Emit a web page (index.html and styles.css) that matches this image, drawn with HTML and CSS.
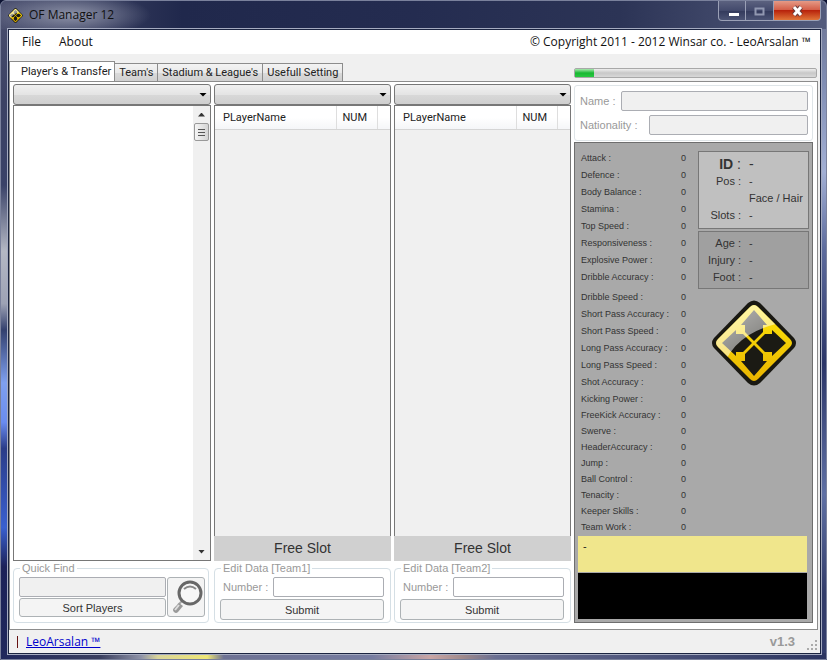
FILE: index.html
```html
<!DOCTYPE html>
<html lang="en">
<head>
<meta charset="utf-8">
<title>OF Manager 12</title>
<link rel="stylesheet" href="styles.css">
</head>
<body>
<svg class="defs" aria-hidden="true">
  <defs>
    <linearGradient id="gold" x1="0" y1="0" x2="0" y2="1">
      <stop offset="0" stop-color="#ffe70a"/><stop offset="1" stop-color="#e9b400"/>
    </linearGradient>
    <linearGradient id="shine" x1="0" y1="0" x2="1" y2="1">
      <stop offset="0" stop-color="#fff" stop-opacity=".75"/><stop offset="1" stop-color="#fff" stop-opacity=".3"/>
    </linearGradient>
    <clipPath id="plate"><path d="M39 7Q43 3 47 7L79 39Q83 43 79 47L47 79Q43 83 39 79L7 47Q3 43 7 39Z"/></clipPath>
    <symbol id="logo" viewBox="0 0 86 86">
      <path d="M37 3Q43-2 49 3L83 38Q87 43 83 48L49 83Q43 88 37 83L3 48Q-1 43 3 38Z" fill="#191812"/>
      <path d="M39 7Q43 3 47 7L79 39Q83 43 79 47L47 79Q43 83 39 79L7 47Q3 43 7 39Z" fill="url(#gold)"/>
      <g fill="#1b1a14">
        <path d="M43 10L56 25H52V32L43 41L34 32V25H30Z"/>
        <path d="M43 76L56 61H52V54L43 45L34 54V61H30Z"/>
        <path d="M11 43L25 30V34H32L41 43L32 52H25V56Z"/>
        <path d="M75 43L61 30V34H54L45 43L54 52H61V56Z"/>
      </g>
      <path d="M0 0H86V20Q55 24 38 35Q22 45 15 60L0 60Z" fill="url(#shine)" clip-path="url(#plate)"/>
    </symbol>
  </defs>
</svg>

<div class="window">
  <header class="titlebar">
    <svg class="app-icon" aria-hidden="true"><use href="#logo"/></svg>
    <h1>OF Manager 12</h1>
    <div class="caption">
      <button type="button" aria-label="Minimize"><svg width="28" height="18"><path d="M10 11h10v3H10z" fill="#fff"/></svg></button>
      <button type="button" aria-label="Maximize"><svg width="28" height="18"><path d="M9.500 6.500h8v6h-8z" fill="none" stroke="#9198b1" stroke-width="2"/></svg></button>
      <button type="button" class="close" aria-label="Close"><svg width="46" height="18"><path d="M20 5l7 8M27 5l-7 8" stroke="#6b3a38" stroke-width="5"/><path d="M20 5l7 8M27 5l-7 8" stroke="#fff" stroke-width="3"/></svg></button>
    </div>
  </header>

  <div class="client">
    <nav class="menubar">
      <button type="button">File</button>
      <button type="button">About</button>
      <span class="copyright">© Copyright 2011 - 2012 Winsar co. - LeoArsalan ™</span>
    </nav>

    <div class="strip">
      <div class="tabs" role="tablist">
        <button type="button" role="tab" aria-selected="true">Player's &amp; Transfer</button>
        <button type="button" role="tab">Team's</button>
        <button type="button" role="tab">Stadium &amp; League's</button>
        <button type="button" role="tab">Usefull Setting</button>
      </div>
      <div class="progress" role="progressbar" aria-label="Loading" aria-valuenow="8"><div class="bar"></div></div>
    </div>

    <main class="page">
      <section class="column players">
        <span class="combo"><select aria-label="Player group"></select></span>
        <div class="listbox">
          <div class="scrollbar">
            <button type="button" class="up" aria-label="Scroll up"></button>
            <div class="thumb"><i></i><i></i><i></i></div>
            <button type="button" class="down" aria-label="Scroll down"></button>
          </div>
        </div>
        <fieldset>
          <legend>Quick Find</legend>
          <div class="find">
            <div class="find-fields">
              <input type="text" aria-label="Quick Find" disabled>
              <button type="button">Sort Players</button>
            </div>
            <button type="button" class="search" aria-label="Search">
              <svg width="36" height="36" viewBox="0 0 36 36">
                <path d="M14 22l-4 4" stroke="#aaa" stroke-width="2"/>
                <path d="M11 24l4 3-5 6q-2 2-4 0t0-4z" fill="#999"/><path d="M11 26l-4 5" stroke="#ddd" stroke-width="2"/>
                <circle cx="22" cy="14" r="11" fill="#f7f7f7" stroke="#686868" stroke-width="3"/>
                <path d="M16 10q6-5 12 0" fill="none" stroke="#888" stroke-width="2"/>
              </svg>
            </button>
          </div>
        </fieldset>
      </section>

      <section class="column">
        <span class="combo"><select aria-label="Team 1"></select></span>
        <div class="grid-list"><table><thead><tr><th>PLayerName</th><th class="num">NUM</th><th class="rest"></th></tr></thead></table></div>
        <div class="slot">Free Slot</div>
        <fieldset>
          <legend>Edit Data [Team1]</legend>
          <div class="field"><label for="n1">Number :</label><input id="n1" type="text"></div>
          <button type="button" class="submit">Submit</button>
        </fieldset>
      </section>

      <section class="column">
        <span class="combo"><select aria-label="Team 2"></select></span>
        <div class="grid-list"><table><thead><tr><th>PLayerName</th><th class="num">NUM</th><th class="rest"></th></tr></thead></table></div>
        <div class="slot">Free Slot</div>
        <fieldset>
          <legend>Edit Data [Team2]</legend>
          <div class="field"><label for="n2">Number :</label><input id="n2" type="text"></div>
          <button type="button" class="submit">Submit</button>
        </fieldset>
      </section>

      <section class="detail">
        <div class="identity">
          <div class="field"><label for="name">Name :</label><input id="name" type="text" disabled></div>
          <div class="field nation"><label for="nation">Nationality :</label><input id="nation" type="text" disabled></div>
        </div>
        <div class="stats">
          <div class="stats-top">
            <table class="abilities">
              <tbody>
                <tr><th>Attack :</th><td>0</td></tr>
                <tr><th>Defence :</th><td>0</td></tr>
                <tr><th>Body Balance :</th><td>0</td></tr>
                <tr><th>Stamina :</th><td>0</td></tr>
                <tr><th>Top Speed :</th><td>0</td></tr>
                <tr><th>Responsiveness :</th><td>0</td></tr>
                <tr><th>Explosive Power :</th><td>0</td></tr>
                <tr class="last"><th>Dribble Accuracy :</th><td>0</td></tr>
              </tbody>
              <tbody>
                <tr><th>Dribble Speed :</th><td>0</td></tr>
                <tr><th>Short Pass Accuracy :</th><td>0</td></tr>
                <tr><th>Short Pass Speed :</th><td>0</td></tr>
                <tr><th>Long Pass Accuracy :</th><td>0</td></tr>
                <tr><th>Long Pass Speed :</th><td>0</td></tr>
                <tr><th>Shot Accuracy :</th><td>0</td></tr>
                <tr><th>Kicking Power :</th><td>0</td></tr>
              </tbody>
              <tbody class="tight">
                <tr><th>FreeKick Accuracy :</th><td>0</td></tr>
                <tr><th>Swerve :</th><td>0</td></tr>
                <tr><th>HeaderAccuracy :</th><td>0</td></tr>
                <tr><th>Jump :</th><td>0</td></tr>
                <tr><th>Ball Control :</th><td>0</td></tr>
                <tr><th>Tenacity :</th><td>0</td></tr>
                <tr><th>Keeper Skills :</th><td>0</td></tr>
                <tr><th>Team Work :</th><td>0</td></tr>
              </tbody>
            </table>
            <div class="side">
              <dl class="card light">
                <dt class="id"><b>ID</b> :</dt><dd class="id">-</dd>
                <dt>Pos :</dt><dd>-</dd>
                <dt></dt><dd>Face / Hair</dd>
                <dt>Slots :</dt><dd>-</dd>
              </dl>
              <dl class="card">
                <dt>Age :</dt><dd>-</dd>
                <dt>Injury :</dt><dd>-</dd>
                <dt>Foot :</dt><dd>-</dd>
              </dl>
              <svg class="emblem" role="img" aria-label="OF Manager"><use href="#logo"/></svg>
            </div>
          </div>
          <div class="note">-</div>
          <div class="console"></div>
        </div>
      </section>
    </main>

    <footer class="status">
      <span class="tick"></span>
      <a href="#">LeoArsalan ™</a>
      <span class="version">v1.3</span>
      <svg class="grip" width="11" height="11" aria-hidden="true"><path d="M8 0h2v2H8zM4 4h2v2H4zM8 4h2v2H8zM0 8h2v2H0zM4 8h2v2H4zM8 8h2v2H8z" fill="#aaa"/></svg>
    </footer>
  </div>
</div>
</body>
</html>
```
FILE: styles.css
```css
* { box-sizing: border-box; }
html, body { height: 100%; margin: 0; }
body {
  background: #0c1232;
  color: #222;
  font: 11px/16px "Liberation Sans", sans-serif;
}
button, input, select { font: inherit; color: inherit; margin: 0; }
.defs { position: absolute; width: 0; height: 0; }

.window {
  min-height: 100vh;
  display: flex;
  flex-direction: column;
  padding: 1px 5px 5px 7px;
  border: 1px solid #7a819c;
  border-radius: 6px 6px 0 0;
  background:
    linear-gradient(90deg, #20285c, #3a3f60 12%, #8f93a8 17%, #d9d49a 19%, #eee676 25%, #6e7294 27%, #767ca0 45%, #c9a5a5 52%, #a08a8c 56%, #6a6f92 60%, #2c3560) bottom / 100% 6px no-repeat,
    linear-gradient(#4a4f6e, #3c4264 15%, #3a4268 28%, #b4b8c4 38%, #9da2b4 46%, #33406e 50%, #7fa0f0 58%, #6a8cf0 64%, #2a3c88 68%, #3a60d0 80%, #1c2258 86%, #20285c) left / 8px 100% no-repeat,
    linear-gradient(#6a708e, #7f8cb2 12%, #a2afd4 26%, #5c6a9c 38%, #2b3568 55%, #5f70a4 75%, #323c6a 90%) right / 6px 100% no-repeat,
    #20284c;
}
.titlebar {
  flex: 0 0 28px;
  display: flex;
  align-items: center;
  margin: -1px -5px 0 -7px;
  padding: 0 5px 0 7px;
  border-radius: 6px 6px 0 0;
  background: radial-gradient(ellipse 80px 22px at 70px 14px, #8e93a8, transparent),
    linear-gradient(90deg, #4d5271, #20284c 22%, #242c50 50%, #2c3456 75%, #535b7c);
}
.app-icon { width: 15px; height: 15px; margin-right: 6px; }
h1 { margin: 0; font: 12px/16px "Open Sans", sans-serif; color: #111; }
.caption { display: flex; align-self: flex-start; margin-left: auto; }
.caption button {
  width: 28px;
  height: 20px;
  padding: 0;
  border: 1px solid #9aa0b6;
  border-top: 0;
  border-left-width: 0;
  background: linear-gradient(#5b617f, #434a6c 50%, #333a5c 52%, #4c5475);
}
.caption button:first-child { border-left-width: 1px; border-bottom-left-radius: 4px; }
.caption .close {
  width: 47px;
  border-bottom-right-radius: 4px;
  background: linear-gradient(#e59a86, #d4604a 45%, #b8230c 50%, #e07438);
}
.caption svg { display: block; }

.client {
  flex: 1;
  display: flex;
  flex-direction: column;
  background: #f0f0f0;
  border: 1px solid #1b2440;
  outline: 1px solid #a5abc0;
}
.menubar {
  flex: 0 0 24px;
  display: flex;
  align-items: center;
  padding: 0 9px 0 13px;
  gap: 18px;
  background: #fff;
  color: #111;
  font: 12px/16px "Open Sans", sans-serif;
}
.menubar button { padding: 0; border: 0; background: none; }
.copyright { margin-left: auto; }

.strip { flex: 0 0 27px; display: flex; align-items: flex-end; justify-content: space-between; padding: 0 3px 0 0; }
.tabs { display: flex; align-items: flex-end; }
.tabs button {
  height: 18px;
  padding: 0 4px;
  border: 1px solid #8c8c8c;
  border-left-width: 0;
  border-bottom: 0;
  background: linear-gradient(#f3f3f3, #e9e9e9 50%, #dadada 52%, #d0d0d0);
  font-family: Roboto, sans-serif;
  line-height: 16px;
  white-space: nowrap;
}
.tabs [aria-selected] { height: 20px; padding: 0 3px 0 11px; border-left-width: 1px; background: #fff; }
.progress {
  width: 243px;
  height: 10px;
  margin-bottom: 3px;
  border: 1px solid #a8a8a8;
  border-radius: 2px;
  background: linear-gradient(#eee, #c8c8c8 50%, #d8d8d8);
}
.bar { width: 8%; height: 8px; background: linear-gradient(#a8e8ae, #18b832 50%, #28c840); }

.page {
  flex: 1;
  display: grid;
  grid-template-columns: 198fr 177fr 177fr 239fr;
  gap: 3px;
  margin-right: 2px;
  padding: 2px 4px 6px 3px;
  border: 1px solid #8c8c8c;
  background: #fff;
}
.column { display: flex; flex-direction: column; min-width: 0; }
.combo { display: grid; flex: 0 0 21px; }
.combo::after {
  content: "";
  grid-area: 1 / 1;
  place-self: center end;
  width: 8px;
  height: 4px;
  margin-right: 4px;
  background: #000;
  clip-path: polygon(0 0, 100% 0, 50% 100%);
  pointer-events: none;
}
.combo select {
  grid-area: 1 / 1;
  appearance: none;
  border: 1px solid #777;
  border-radius: 3px;
  background: linear-gradient(#f0f0f0, #e4e4e4 50%, #d8d8d8 52%, #cfcfcf);
}
.listbox { flex: 1; display: flex; justify-content: flex-end; border: 1px solid #777; background: #fff; }
.scrollbar { width: 17px; display: flex; flex-direction: column; background: #f0f0f0; }
.scrollbar button { height: 17px; padding: 0; border: 0; background: none; display: grid; place-items: center; }
.scrollbar button::before { content: ""; width: 7px; height: 4px; background: #333; clip-path: polygon(0 0, 100% 0, 50% 100%); }
.scrollbar .up::before { clip-path: polygon(50% 0, 100% 100%, 0 100%); }
.scrollbar .down { margin-top: auto; }
.thumb {
  height: 18px;
  margin: 0 1px;
  display: flex;
  flex-direction: column;
  align-items: center;
  justify-content: center;
  gap: 2px;
  border: 1px solid #999;
  border-radius: 2px;
  background: linear-gradient(90deg, #f5f5f5, #d4d4d4);
}
.thumb i { width: 7px; height: 1px; background: #555; }

.grid-list { flex: 1; border: 1px solid #777; border-bottom: 0; background: #f0f0f0; }
.grid-list table { width: 100%; border-collapse: collapse; table-layout: fixed; }
.grid-list th {
  height: 23px;
  padding: 1px 0 0 8px;
  border-right: 1px solid #dedede;
  border-bottom: 1px solid #d5d5d5;
  background: linear-gradient(#fff 50%, #f5f6f8);
  font-family: Roboto, sans-serif;
  font-weight: 400;
  text-align: left;
}
.grid-list .num { width: 41px; padding-left: 6px; }
.grid-list .rest { width: 13px; border-right: 0; }
.slot { height: 25px; background: #d0d0d0; color: #333; font-size: 14px; line-height: 25px; text-align: center; }

fieldset {
  min-width: 0;
  height: 62px;
  margin: 0;
  padding: 1px 6px 0 5px;
  border: 1px solid #d5dfe5;
  border-radius: 4px;
  color: #999;
}
.players fieldset { margin-right: 2px; padding: 1px 3px 0 5px; }
legend { margin-left: 1px; padding: 0 2px; line-height: 15px; }
fieldset button { border: 1px solid #adb2b5; border-radius: 3px; background: #f4f4f4; color: #333; padding: 0; }
input[type="text"] { min-width: 0; width: 100%; height: 20px; border: 1px solid #abadb3; border-radius: 2px; background: #fff; padding: 0 3px; }
input[type="text"]:disabled { background: #f0f0f0; }
.find { display: flex; gap: 1px; }
.find-fields { flex: 1; display: grid; gap: 1px; }
.find-fields button { height: 19px; }
.search { width: 38px; height: 40px; }
.search svg { display: block; }
.field { display: flex; align-items: center; gap: 5px; }
.field label { white-space: nowrap; color: #999; }
fieldset .field { margin-left: 3px; height: 20px; }
.submit { display: block; width: 100%; height: 21px; margin-top: 2px; }

.detail { display: flex; flex-direction: column; gap: 1px; min-width: 0; }
.identity { display: grid; gap: 4px; height: 56px; margin-top: 1px; padding: 5px 4px 6px 5px; border: 1px solid #dfe5e8; border-radius: 3px; }
.identity .field { gap: 6px; }
.identity .nation { gap: 12px; }
.stats { flex: 1; display: flex; flex-direction: column; padding: 6px 5px 3px 3px; border: 1px solid #6e6e6e; background: #a9a9a9; }
.stats-top { flex: 1; display: flex; align-items: flex-start; justify-content: space-between; }
.abilities { width: 105px; margin-left: 3px; border-collapse: collapse; font-size: 9px; line-height: 12px; color: #333; }
.abilities th, .abilities td { height: 17px; padding: 0; font-weight: 400; text-align: left; white-space: nowrap; }
.abilities td { width: 6px; text-align: right; }
.abilities .last > * { height: 20px; padding-bottom: 3px; }
.abilities .tight > tr > * { height: 16px; }
.side { display: flex; flex-direction: column; gap: 2px; width: 111px; margin-right: -2px; padding-top: 2px; }
.card {
  display: grid;
  grid-template-columns: 42px 1fr;
  grid-auto-rows: 17px;
  gap: 0 8px;
  align-content: center;
  height: 58px;
  margin: 0;
  border: 1px solid #777;
  background: #a0a0a0;
  color: #333;
  line-height: 17px;
}
.card.light { height: 78px; background: #c0c0c0; }
.card dt { text-align: right; white-space: nowrap; }
.card dd { margin: 0; white-space: nowrap; }
.card .id { font-size: 14px; }
.emblem { width: 86px; height: 86px; margin-top: 9px; align-self: center; }
.note { height: 36px; padding: 2px 5px; background: #f0e68c; }
.console { height: 46px; margin-top: 1px; background: #000; }

.status { flex: 0 0 23px; display: flex; align-items: center; padding: 0 2px 0 8px; font: 12px/16px "Open Sans", sans-serif; }
.tick { width: 1px; height: 12px; margin-right: 8px; background: #611; }
.status a { color: #00c; text-decoration: underline; }
.version { margin-left: auto; margin-right: 12px; color: #999; font: 700 13px/16px "Liberation Sans", sans-serif; }
.grip { align-self: flex-end; margin-bottom: 2px; }
```
